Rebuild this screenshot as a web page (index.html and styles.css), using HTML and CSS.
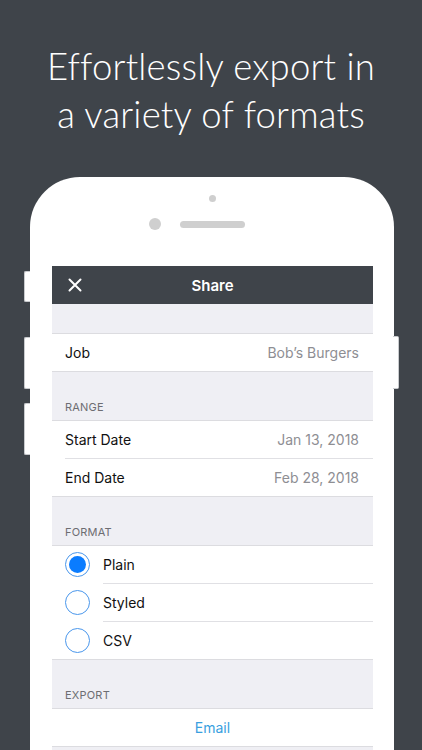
FILE: index.html
```html
<!doctype html>
<html>
<head>
    <meta charset="utf-8">
    <title>Share</title>
    <link rel="stylesheet" href="styles.css">
</head>
<body>
    <h1 class="headline">Effortlessly export in<br>a variety of formats</h1>
    <div class="phone">
        <span class="btn btn-l1"></span>
        <span class="btn btn-l2"></span>
        <span class="btn btn-l3"></span>
        <span class="btn btn-r1"></span>
        <div class="sensor"></div>
        <div class="earpiece">
            <span class="camera"></span>
            <span class="speaker"></span>
            <span class="spacer"></span>
        </div>
        <div class="screen">
            <div class="navbar">
                <svg class="close" width="14" height="14" viewBox="0 0 14 14">
                    <path d="M1.5 1.5 L12.5 12.5 M12.5 1.5 L1.5 12.5" stroke="#fff" stroke-width="2" stroke-linecap="round"/>
                </svg>
                <span class="title">Share</span>
            </div>
            <div class="gap"></div>
            <ul class="group">
                <li class="row"><span>Job</span><span class="val">Bob’s Burgers</span></li>
            </ul>
            <div class="head">RANGE</div>
            <ul class="group">
                <li class="row"><span>Start Date</span><span class="val">Jan 13, 2018</span></li>
                <li class="row"><span>End Date</span><span class="val">Feb 28, 2018</span></li>
            </ul>
            <div class="head">FORMAT</div>
            <ul class="group">
                <li class="row radio-row"><span class="radio on"></span><span class="label">Plain</span></li>
                <li class="row radio-row"><span class="radio"></span><span class="label">Styled</span></li>
                <li class="row radio-row"><span class="radio"></span><span class="label">CSV</span></li>
            </ul>
            <div class="head">EXPORT</div>
            <ul class="group">
                <li class="row action">Email</li>
            </ul>
        </div>
    </div>
</body>
</html>
```

FILE: styles.css
```css
body,
ul,
h1 {
    margin: 0;
    padding: 0;
}
body {
    background: #3f444a;
    height: 750px;
    overflow: hidden;
}
li {
    list-style: none;
}
.headline {
    padding-top: 42px;
    font-family: "Lato", "Open Sans", sans-serif;
    font-weight: 300;
    font-size: 36.5px;
    line-height: 48px;
    color: #fff;
    text-align: center;
    letter-spacing: 0.2px;
}
/* corpo del telefono */
.phone {
    position: relative;
    width: 364px;
    height: 600px;
    margin: 39px 0 0 30px;
    padding-top: 18px;
    box-sizing: border-box;
    background: #fff;
    border-radius: 50px 50px 0 0;
}
.btn {
    position: absolute;
    width: 6px;
    background: #fff;
    border: 1px solid #c9cbce;
    box-sizing: border-box;
}
.btn-l1,
.btn-l2,
.btn-l3 {
    left: -6px;
    border-right: none;
    border-radius: 2px 0 0 2px;
}
.btn-l1 { top: 94px; height: 31px; }
.btn-l2 { top: 160px; height: 52px; }
.btn-l3 { top: 226px; height: 52px; }
.btn-r1 {
    right: -5px;
    top: 159px;
    height: 53px;
    border-left: none;
    border-radius: 0 2px 2px 0;
}
.sensor {
    width: 7px;
    height: 7px;
    margin: 0 auto;
    border-radius: 50%;
    background: #cfcfcf;
}
.earpiece {
    display: flex;
    justify-content: center;
    align-items: center;
    gap: 19px;
    margin-top: 16px;
    height: 12px;
}
.camera,
.spacer {
    width: 12px;
    height: 12px;
    border-radius: 50%;
}
.camera {
    background: #cfcfcf;
}
.speaker {
    width: 65px;
    height: 7px;
    border-radius: 4px;
    background: #cfcfcf;
}
.screen {
    margin: 36px 21px 0 22px;
    background: #efeff4;
    height: 500px;
    font-family: "Inter", "Roboto", sans-serif;
    font-size: 14px;
    color: #111;
}
.navbar {
    display: flex;
    align-items: center;
    justify-content: center;
    position: relative;
    height: 38px;
    background: #3f444a;
}
.close {
    position: absolute;
    left: 16px;
    top: 12px;
}
.title {
    color: #fff;
    font-size: 15px;
    font-weight: 600;
}
.gap {
    height: 29px;
}
.group {
    background: #fff;
    border-top: 1px solid #dcdce0;
    border-bottom: 1px solid #dcdce0;
}
.row {
    display: flex;
    align-items: center;
    justify-content: space-between;
    height: 37px;
    margin-left: 13px;
    padding-right: 14px;
}
.row + .row {
    border-top: 1px solid #e0e0e4;
}
.val {
    color: #8e8e93;
}
.head {
    height: 48px;
    box-sizing: border-box;
    padding: 0 0 6px 13px;
    display: flex;
    align-items: flex-end;
    font-size: 11px;
    color: #6d6d72;
    letter-spacing: 0.2px;
}
.radio-row {
    justify-content: flex-start;
    margin-left: 0;
    padding-left: 13px;
}
.radio-row + .radio-row {
    border-top: 1px solid transparent;
    background: linear-gradient(#e0e0e4, #e0e0e4) no-repeat 51px 0 / 100% 1px;
    background-origin: border-box;
}
.radio {
    width: 25px;
    height: 25px;
    box-sizing: border-box;
    border: 1.5px solid #4a97ec;
    border-radius: 50%;
    display: flex;
    align-items: center;
    justify-content: center;
    margin-right: 13px;
}
.radio.on:after {
    content: "";
    width: 17px;
    height: 17px;
    border-radius: 50%;
    background: #0a7cff;
}
.action {
    justify-content: center;
    margin-left: 0;
    padding-right: 0;
    color: #3a9fe0;
}
```
